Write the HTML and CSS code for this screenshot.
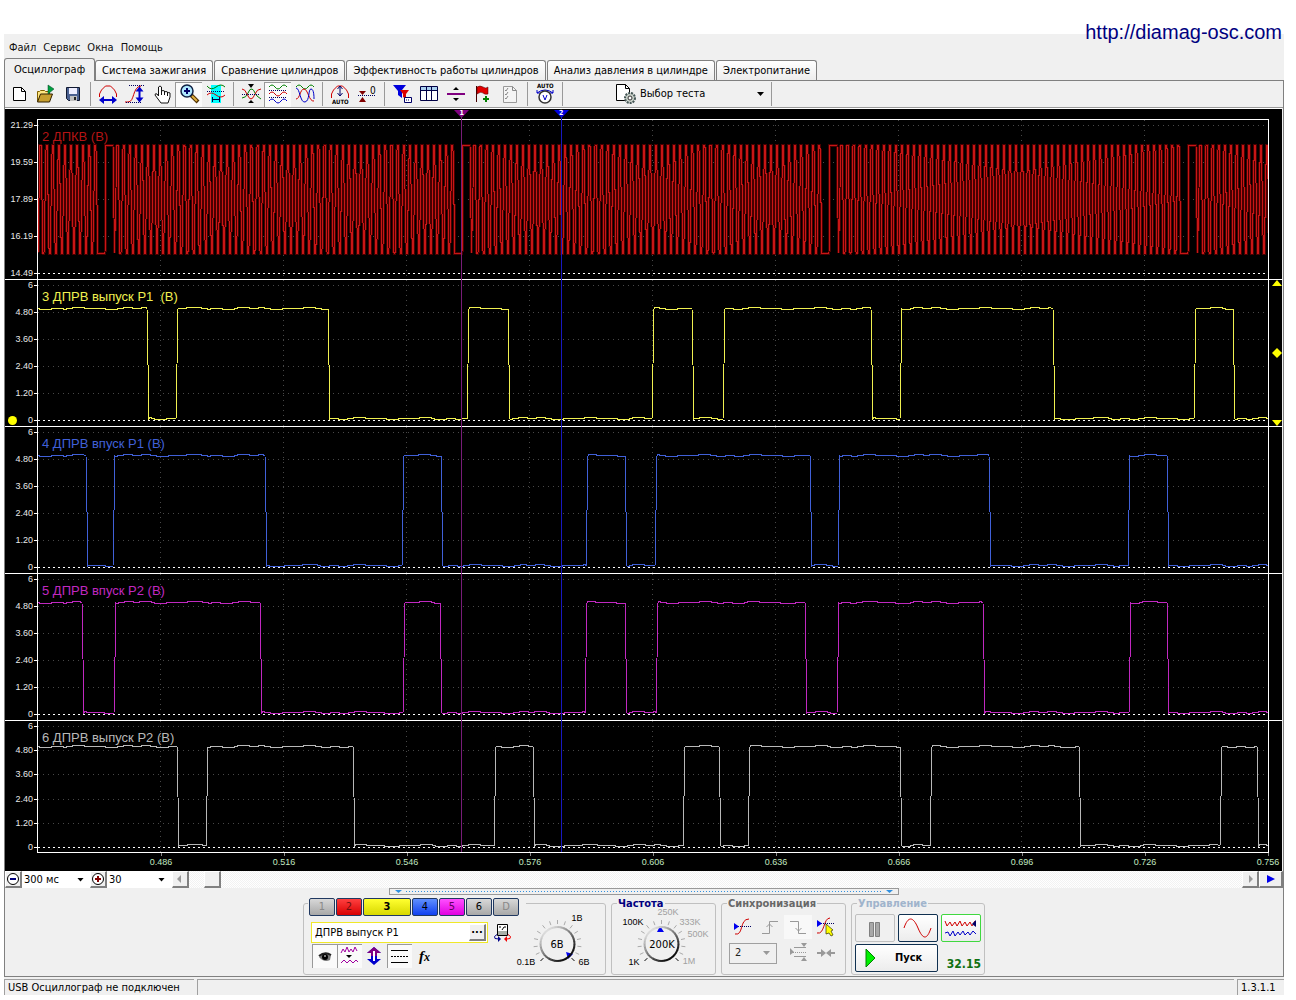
FILE: index.html
```html
<!DOCTYPE html>
<html lang="ru">
<head>
<meta charset="utf-8">
<title>Осциллограф</title>
<link rel="stylesheet" href="styles.css">
</head>
<body>
<a class="site" href="#site">http://diamag-osc.com</a>
<main class="window">
  <nav class="menu">
    <a href="#file">Файл</a><a href="#service">Сервис</a><a href="#windows">Окна</a><a href="#help">Помощь</a>
  </nav>
  <div class="tabs">
    <button class="tab active">Осциллограф</button>
    <button class="tab">Система зажигания</button>
    <button class="tab">Сравнение цилиндров</button>
    <button class="tab">Эффективность работы цилиндров</button>
    <button class="tab">Анализ давления в цилиндре</button>
    <button class="tab">Электропитание</button>
  </div>
  <div class="page">
    <div class="toolbar">
      <button class="tool" aria-label="Новый"><svg viewBox="0 0 24 24"><path d="M6.500 5.500h8l4 4v9h-12z" fill="#fff" stroke="#000"/><path d="M14.500 5.500v4h4" fill="none" stroke="#000"/></svg></button>
      <button class="tool" aria-label="Открыть"><svg viewBox="0 0 24 24"><path d="M3.500 19.500v-10h2l1-1h4l1 1h4v3" fill="#ffe680" stroke="#806000"/><path d="M3.500 20l3-8h12l-3 8z" fill="#c8a030" stroke="#302000"/><path d="M14 3v9l6-5z" fill="#00a040" stroke="#004020" stroke-width=".5"/></svg></button>
      <button class="tool" aria-label="Сохранить"><svg viewBox="0 0 24 24"><path d="M5.500 5.500h13v13h-11l-2-2z" fill="#4a6090" stroke="#101830"/><path d="M8 6h8v6h-8z" fill="#eef"/><path d="M9 14h7v5h-7z" fill="#c0c0c0"/><path d="M13 15h2v3h-2z" fill="#222"/></svg></button>
      <i class="sep"></i>
      <button class="tool" aria-label="Растянуть по времени"><svg viewBox="0 0 24 24"><path d="M3.500 15V12l2-4 4-4h5l4 4 2 4v3" class="red"/><path d="M3 18l5-4v3h8v-3l5 4-5 4v-3H8v3z" fill="#00c"/></svg></button>
      <button class="tool" aria-label="Растянуть по амплитуде"><svg viewBox="0 0 24 24"><path d="M2 20h3c7 0 4-15 13-16" class="red"/><path d="M6 3.500h15M3 20.500h15" class="dots"/><path d="M16.500 4.500l-4 5h3v6h-3l4 5 4-5h-3v-6h3z" fill="#00c"/></svg></button>
      <button class="tool" aria-label="Рука"><svg viewBox="0 0 24 24"><path d="M8.500 14V5q1.500-2 3 0v6-2q1.500-1 3 0v2-1q1.500-1 3 0v1q1.500-1 2.500 0v4l-2 6h-7l-6-8q0-2 2-1z" fill="#fff" stroke="#111"/><path d="M11.500 10v3M14.500 10v3M17.500 11v3" stroke="#111"/></svg></button>
      <button class="tool pressed" aria-label="Лупа"><svg viewBox="0 0 24 24"><path d="M14 13l7 7" stroke="#503000" stroke-width="4"/><path d="M15 14l5 5" stroke="#e0b040" stroke-width="2"/><circle cx="10" cy="9" r="6" fill="#aee8ff" stroke="#124" stroke-width="1.500"/><path d="M7 9h6M10 6v6" stroke="#006" stroke-width="2"/></svg></button>
      <button class="tool" aria-label="Выделить участок"><svg viewBox="0 0 24 24"><path d="M7 3h10v18H7z" fill="#0ff"/><path d="M3 4q4 5 9 1t9 0" class="green"/><path d="M3 9.500h18" class="dots"/><path d="M3 13q4-4 9 0t9 0" class="red"/><path d="M8.500 15v5M15.500 15v5M8 17.500h8" stroke="#004"/></svg></button>
      <i class="sep"></i>
      <button class="tool" aria-label="Совместить"><svg viewBox="0 0 24 24"><path d="M3 16q4 0 6-5t4-4 3 4 6 6" class="green"/><path d="M3 7q3 0 5 5t4 5 4-5 6-5" class="red"/><path d="M3 12.500h18" class="dots"/><path d="M9 2h6l-3 4zM9 21h6l-3-3z"/></svg></button>
      <button class="tool pressed" aria-label="Разделить каналы"><svg viewBox="0 0 24 24"><path d="M3 5q3-4 6 0t6 0 6 0" class="green"/><path d="M3 12q3-4 6 0t6 0 6 0" class="red"/><path d="M3 19q3-4 6 0t6 0 6 0" class="blue"/><path d="M3 8.500h18M3 15.500h18" class="dots"/></svg></button>
      <button class="tool" aria-label="Наложить каналы"><svg viewBox="0 0 24 24"><path d="M3 5q3-4 6 0t6 0 6 0" class="green"/><path d="M3 17c4 0 4-10 8-10s5 13 10 12" class="red"/><path d="M3 6c4 0 4 15 9 14s3-13 6-13 3 8 3 10" class="blue"/></svg></button>
      <i class="sep"></i>
      <button class="tool" aria-label="Авто масштаб"><svg viewBox="0 0 24 24"><path d="M3.500 16v-4l2-4 4-4h5l4 4 2 4v4" class="red"/><path d="M12 4v10M9.500 7l2.500-3 2.500 3M9.500 11l2.500 3 2.500-3" fill="none" stroke="#006"/><text x="4" y="22" class="mini">AUTO</text></svg></button>
      <button class="tool" aria-label="Установить ноль"><svg viewBox="0 0 24 24"><path d="M4 9h7l-3.500 4zM4 20h7l-3.500-5z" fill="#800000"/><path d="M3 13.500h18" class="dots"/><text x="15" y="12" class="zero">0</text></svg></button>
      <i class="sep"></i>
      <button class="tool" aria-label="Фильтр"><svg viewBox="0 0 24 24"><path d="M3 3h13l-4 5v8l-4-3V9z" fill="#00d"/><path d="M10 8h9l-3 4v5l-3-2v-3z" fill="#d00"/><path d="M14.500 15.500h7v5h-7z" fill="#fff" stroke="#006"/><path d="M16 18h4" class="dots"/></svg></button>
      <button class="tool" aria-label="Таблица"><svg viewBox="0 0 24 24"><path d="M3.500 4.500h17v14h-17z" fill="#fff" stroke="#004"/><path d="M4 5h16v3H4z" fill="#aad0f0"/><path d="M4 8.500h16M9.500 5v13M14.500 5v13" stroke="#004"/></svg></button>
      <button class="tool" aria-label="Линейка"><svg viewBox="0 0 24 24"><path d="M3 11h18v2H3z" fill="#800080"/><path d="M9 8h6l-3-3zM9 16h6l-3 3z"/></svg></button>
      <button class="tool" aria-label="Добавить маркер"><svg viewBox="0 0 24 24"><path d="M5.500 4v16" stroke="#400"/><path d="M6 5q3-2 6 0t5 0v7q-3 1-5-1t-6 1z" fill="#e00000" stroke="#400" stroke-width=".5"/><path d="M12 17h6M15 14v6" stroke="#008000" stroke-width="2"/></svg></button>
      <button class="tool" aria-label="Отчёт"><svg viewBox="0 0 24 24"><path d="M5.500 4.500h9l4 4v12h-13z" fill="#f4f4f4" stroke="#999"/><path d="M14.500 4.500v4h4M7 8l1 1 2-3M7 12l1 1 2-3M7 16l1 1 2-3" fill="none" stroke="#888"/></svg></button>
      <i class="sep"></i>
      <button class="tool" aria-label="Авто напряжение"><svg viewBox="0 0 24 24"><text x="4" y="6" class="mini">AUTO</text><path d="M4 11q8-6 16 0M4 8v3h3M20 8v3h-3" class="blue"/><circle cx="12" cy="15" r="6" fill="#fff" stroke="#333" stroke-width="1.500"/><path d="M10 13l2 5 2-5" class="blue"/></svg></button>
      <i class="sep"></i>
      <button class="test">
        <svg class="gear" viewBox="0 0 22 22"><path d="M1.500 1.500h9l4 4v12h-13z" fill="#fff" stroke="#000"/><path d="M10.500 1.500v4h4" fill="none" stroke="#000"/><circle cx="15" cy="15" r="5" fill="#c8d0c8" stroke="#455" stroke-width="2" stroke-dasharray="2 1"/><circle cx="15" cy="15" r="2" fill="#fff" stroke="#333"/></svg>
        <span>Выбор теста</span><i class="down"></i>
      </button>
      <i class="sep"></i>
    </div>

    <section class="chart">
      <div class="panel crank">
        <div class="scale"><span>21.29</span><span>19.59</span><span>17.89</span><span>16.19</span><span>14.49</span></div>
        <div class="plot"><svg viewBox="0 0 1230 159" preserveAspectRatio="none" data-channel="2"></svg><b>2 ДПКВ (В)</b></div>
        <div class="gutter"></div>
      </div>
      <div class="panel yellow">
        <div class="scale"><span>6</span><span>4.80</span><span>3.60</span><span>2.40</span><span>1.20</span><span class="chosen">0</span></div>
        <div class="plot"><svg viewBox="0 0 1230 146" preserveAspectRatio="none" data-channel="3"></svg><b>3 ДПРВ выпуск Р1&nbsp; (В)</b></div>
        <div class="gutter">
          <svg viewBox="0 0 10 6"><path d="M0 6l5-6 5 6z"/></svg>
          <svg class="level" viewBox="0 0 10 10"><path d="M0 5l5-5 5 5-5 5z"/></svg>
          <svg viewBox="0 0 10 6"><path d="M0 0h10L5 6z"/></svg>
        </div>
      </div>
      <div class="panel azure">
        <div class="scale"><span>6</span><span>4.80</span><span>3.60</span><span>2.40</span><span>1.20</span><span>0</span></div>
        <div class="plot"><svg viewBox="0 0 1230 146" preserveAspectRatio="none" data-channel="4"></svg><b>4 ДПРВ впуск Р1 (В)</b></div>
        <div class="gutter"></div>
      </div>
      <div class="panel magenta">
        <div class="scale"><span>6</span><span>4.80</span><span>3.60</span><span>2.40</span><span>1.20</span><span>0</span></div>
        <div class="plot"><svg viewBox="0 0 1230 146" preserveAspectRatio="none" data-channel="5"></svg><b>5 ДПРВ впуск Р2 (В)</b></div>
        <div class="gutter"></div>
      </div>
      <div class="panel grey">
        <div class="scale"><span>6</span><span>4.80</span><span>3.60</span><span>2.40</span><span>1.20</span><span>0</span></div>
        <div class="plot"><svg viewBox="0 0 1230 131" preserveAspectRatio="none" data-channel="6"></svg><b>6 ДПРВ выпуск Р2 (В)</b></div>
        <div class="gutter"></div>
      </div>
      <div class="times"><span>0.486</span><span>0.516</span><span>0.546</span><span>0.576</span><span>0.606</span><span>0.636</span><span>0.666</span><span>0.696</span><span>0.726</span><span>0.756</span></div>
      <div class="cursors">
        <div class="cursor one"><svg viewBox="0 0 15 8"><path d="M0 0h15L7.500 8z"/></svg><span>1</span></div>
        <div class="cursor two"><svg viewBox="0 0 15 8"><path d="M0 0h15L7.500 8z"/></svg><span>2</span></div>
      </div>
    </section>

    <div class="timebar">
      <button class="raised" aria-label="Уменьшить"><svg viewBox="0 0 16 16"><circle cx="8" cy="8" r="5.500" fill="#fff" stroke="#000"/><path d="M5 8h6" stroke="#00007a" stroke-width="2"/></svg></button>
      <label class="combo range"><select aria-label="Длительность"><option>300 мс</option></select><i class="down"></i></label>
      <button class="raised" aria-label="Увеличить"><svg viewBox="0 0 16 16"><circle cx="8" cy="8" r="5.500" fill="#fff" stroke="#000"/><path d="M5 8h6M8 5v6" stroke="#800000" stroke-width="2"/></svg></button>
      <label class="combo step"><select aria-label="Шаг"><option>30</option></select><i class="down"></i></label>
      <button class="raised" aria-label="Назад"><svg viewBox="0 0 16 16"><path d="M9 4v8L5 8z" fill="#999"/></svg></button>
      <div class="track"><button class="raised" aria-label="Позиция"></button></div>
      <button class="raised" aria-label="Вперёд"><svg viewBox="0 0 16 16"><path d="M7 4v8l4-4z" fill="#999"/></svg></button>
      <button class="raised play" aria-label="Воспроизвести"><svg viewBox="0 0 16 16"><path d="M4 4v8l8-4z" fill="#00e"/></svg></button>
    </div>

    <div class="splitter"><i></i><i class="line"></i><i></i></div>

    <div class="controls">
      <section class="group channels">
        <div class="left">
          <div class="keys">
            <button class="key off">1</button><button class="key k2">2</button><button class="key k3">3</button><button class="key k4">4</button><button class="key k5">5</button><button class="key">6</button><button class="key off">D</button>
          </div>
          <div class="naming">
            <div class="name"><input type="text" value="ДПРВ выпуск Р1" aria-label="Имя канала"><button class="raised">...</button></div>
            <button class="plain" aria-label="Поменять датчик"><svg viewBox="0 0 20 20"><path d="M4.500 1.500h10v11h-10z" fill="#fff" stroke="#000"/><path d="M5 8h9v4H5z" fill="#a8b0a8"/><path d="M6 4h2M11 4h2M9 7l2-3" stroke="#000"/><path d="M4 11.500q-4 2-2 4l4 .5" fill="none" stroke="#008"/><path d="M5 13v6l3-3z" fill="#008"/><path d="M15 11.500q4 2 2 4l-3 .5" fill="none" stroke="#e00"/><path d="M14 13v6l-3-3z" fill="#e00"/></svg></button>
          </div>
          <div class="modes">
            <button class="mode on" aria-label="Показать"><svg viewBox="0 0 24 24"><path d="M7 13q6-6 12-2l-1 5q-6 3-11-3z" fill="#777"/><path d="M7 12q6-5 12-1" fill="none" stroke="#222" stroke-width="2"/><circle cx="13" cy="13" r="3"/><path d="M12 12h2" stroke="#fff"/></svg></button>
            <button class="mode on" aria-label="Сглаживание"><svg viewBox="0 0 24 24"><path d="M4 9l2-4 2 3 2-5 2 5 2-3 2 3 2-5 2 4M4 19l3-3 3 3 3-3 3 3 3-3 2 2" fill="none" stroke="#a000a0"/><path d="M9 11h6l-3 3z"/></svg></button>
            <button class="mode" aria-label="Смещение"><svg viewBox="0 0 24 24"><path d="M12 3l7 6h-4v6h4l-7 6-7-6h4V9H5z" fill="#00c"/><path d="M12 3l7 6h-4v3H9V9H5z" fill="#800080"/><path d="M12 7v10" stroke="#fff" stroke-width="2"/></svg></button>
            <button class="mode on" aria-label="Уровни"><svg viewBox="0 0 24 24"><path d="M4 6.500h17M4 18.500h17" stroke="#000"/><path d="M4 12.500h17" stroke="#000" stroke-dasharray="2 1"/></svg></button>
            <button class="mode fx"><i>f</i>x</button>
          </div>
        </div>
        <svg class="knob" viewBox="0 0 84 64" data-knob="volt">
          <g class="label"><text x="61" y="14" text-anchor="middle">1В</text><text x="10" y="58" text-anchor="middle">0.1В</text><text x="68" y="58" text-anchor="middle">6В</text></g>
          <text class="value" x="41" y="41" text-anchor="middle">6В</text>
          <path d="M50 45l7 2-5 5z" fill="#00e"/>
        </svg>
      </section>
      <section class="group rate">
        <h2 class="navy">Частота</h2>
        <svg class="knob" viewBox="0 0 100 64" data-knob="rate">
          <g class="label"><text x="21" y="18" text-anchor="middle">100K</text><text x="22" y="58" text-anchor="middle">1K</text></g>
          <g class="label dim"><text x="56" y="8" text-anchor="middle">250K</text><text x="78" y="18" text-anchor="middle">333K</text><text x="86" y="30" text-anchor="middle">500K</text><text x="77" y="57" text-anchor="middle">1M</text></g>
          <text class="value" x="50" y="41" text-anchor="middle">200K</text>
          <path d="M45 25l3-6 4 6z" fill="#00e"/>
        </svg>
      </section>
      <section class="group sync">
        <h2>Синхронизация</h2>
        <div class="syncgrid">
          <button class="plain" aria-label="Уровень"><svg viewBox="0 0 24 24"><path d="M5 19c9 2 4-15 14-15" class="red"/><path d="M4 11.500h17" class="dots"/><path d="M4 8v7l5-3.500z" fill="#00e"/></svg></button>
          <button class="plain" aria-label="Фронт"><svg viewBox="0 0 24 24"><path d="M4 18.500h7.500v-12H20M8.500 12l3-3 3 3" fill="none" stroke="#999"/></svg></button>
          <button class="plain soft" aria-label="Спад"><svg viewBox="0 0 24 24"><path d="M4 6.500h8.500v12H20M9.500 13l3 3 3-3" fill="none" stroke="#999"/></svg></button>
          <button class="plain" aria-label="Выбор уровня"><svg viewBox="0 0 24 24"><path d="M3 18c8 2 6-15 13-15" class="red"/><path d="M3 8.500h18" class="dots"/><path d="M3 5v7l5-3.500z" fill="#00e"/><path d="M12 9l7 6-2 1 2 4-2 1-2-3-3 1z" fill="#ff0" stroke="#330" stroke-width=".7"/></svg></button>
          <label class="combo source"><select aria-label="Канал"><option>2</option></select><i class="down"></i></label>
          <button class="plain" aria-label="Гистерезис"><svg viewBox="0 0 24 24"><path d="M4 7v7l4-3z" fill="#999"/><path d="M8 6.500h12M8 15.500h12" stroke="#999"/><path d="M7 11.500h13" stroke="#999" stroke-dasharray="1 1"/><path d="M15 2h6l-3 4zM15 20h6l-3-4z" fill="#999"/></svg></button>
          <button class="plain" aria-label="Центр"><svg viewBox="0 0 24 24"><path d="M3 11h4V8l5 4-5 4v-3H3zM21 11h-4V8l-5 4 5 4v-3h4z" fill="#999"/></svg></button>
        </div>
      </section>
      <section class="group run">
        <h2 class="pale">Управление</h2>
        <div class="rungrid">
          <button class="box idle" aria-label="Пауза"><svg viewBox="0 0 38 26"><path d="M13.500 7.500h4v14h-4zM19.500 7.500h4v14h-4z" fill="#a8a8a8" stroke="#808080"/></svg></button>
          <button class="box" aria-label="Один канал"><svg viewBox="0 0 38 26"><path d="M5 13C9 1 14 1 19 13s9 12 13 0" class="red"/></svg></button>
          <button class="box live" aria-label="Все каналы"><svg viewBox="0 0 38 26"><path d="M3 6l2 5 3-4 2 4 3-4 2 4 3-5 2 5 3-4 2 4 3-4 2 4 3-5" class="red"/><path d="M3 18l3-1 2 4 3-5 2 5 3-4 2 3 3-4 2 4 3-3 2 3 3-4 3 3" class="blue"/><path d="M34 5v7l-4-3z" fill="#006"/></svg></button>
          <button class="box start"><svg viewBox="0 0 12 20"><path d="M1 1v18l9-9z" fill="#00f000" stroke="#008000"/></svg><span>Пуск</span></button>
          <output class="reading">32.15</output>
        </div>
      </section>
    </div>
  </div>
  <footer class="status"><span class="usb">USB Осциллограф не подключен</span><span class="rest"></span><span class="version">1.3.1.1</span></footer>
</main>
<script src="chart.js"></script>
</body>
</html>
```
FILE: styles.css
```css
* { box-sizing: border-box; }
body {
  margin: 0;
  padding: 34px 12px 5px 4px;
  background: #fff;
  color: #000;
  font: 11px/14px "DejaVu Sans Condensed", "DejaVu Sans", sans-serif;
}
button, input, select { font: inherit; color: inherit; margin: 0; padding: 0; border: 0; background: none; }
svg { display: block; }
.site {
  position: absolute;
  top: 20px;
  right: 14px;
  font: 20px/24px "Liberation Sans", sans-serif;
  color: #000080;
  text-decoration: none;
}
.window { background: #f0f0f0; }
.menu { display: flex; gap: 7px; padding: 7px 5px 3px; }
.menu a { color: #111; text-decoration: none; }
.tabs { display: flex; align-items: flex-end; gap: 1px; }
.tab {
  height: 20px;
  padding: 0 6px;
  border: 1px solid #808080;
  border-bottom: 0;
  border-radius: 3px 3px 0 0;
  background: linear-gradient(#fff, #ededed);
  white-space: nowrap;
}
.tab.active { height: 23px; padding: 0 9px; margin: 0 -1px -1px 0; background: #f0f0f0; position: relative; }
.page { border: 1px solid #808080; }
.toolbar { display: flex; align-items: center; height: 27px; border-bottom: 1px solid #999; background: #f0f0f0; }
.tool { width: 27px; height: 25px; display: flex; align-items: center; justify-content: center; }
.tool svg, .mode svg, .plain svg { width: 24px; height: 24px; }
.pressed, .mode.on { background: #fafafa; box-shadow: inset 1px 1px #999; }
.sep { width: 1px; height: 24px; margin: 0 3px 0 4px; background: #999; }
.red { fill: none; stroke: #d00000; }
.green { fill: none; stroke: #008000; }
.blue { fill: none; stroke: #0000c8; }
.dots { fill: none; stroke: #000060; stroke-dasharray: 1 1; }
.mini { font: bold 6px/1 "DejaVu Sans Condensed", sans-serif; }
.zero { font: 10px/1 "DejaVu Sans Condensed", sans-serif; }
.test { display: flex; align-items: center; gap: 3px; width: 152px; margin-left: 49px; text-align: left; }
.test span { flex: 1; }
.gear { width: 22px; height: 22px; }
.down { width: 7px; height: 4px; background: #000; clip-path: polygon(0 0, 100% 0, 50% 100%); pointer-events: none; }
.test .down { margin-right: 3px; }

.chart { position: relative; overflow: hidden; padding-top: 10px; border-top: 1px solid #fff; background: #000; margin-right: 1px; }
.panel { display: grid; grid-template-columns: 32px 1fr 13px; border-top: 1px solid #fff; }
.panel.crank { border-top: 0; }
.scale { display: flex; flex-direction: column; justify-content: space-between; margin-top: -1px; align-items: flex-end; font: 9px/12px "Liberation Sans", sans-serif; color: #e8e8e8; }
.crank .scale { margin-top: 0; }
.scale span { position: relative; padding-right: 4px; }
.scale span::after { content: ""; position: absolute; right: 0; top: 6px; width: 3px; height: 1px; background: #fff; }
.chosen::before { content: ""; position: absolute; right: 20px; top: 2px; width: 9px; height: 9px; border-radius: 5px; background: #ff0; }
.plot { position: relative; border: solid #fff; border-width: 0 1px; }
.crank .plot { border-top-width: 1px; }
.grey .plot { border-bottom-width: 1px; }
.plot svg { width: 100%; height: 146px; }
.crank .plot svg { height: 159px; }
.grey .plot svg { height: 131px; }
.plot b { position: absolute; left: 4px; top: 9px; font: 13px/16px "Liberation Sans", sans-serif; white-space: pre; }
.plot path { fill: none; stroke: currentColor; vector-effect: non-scaling-stroke; shape-rendering: crispEdges; }
.plot .grid { stroke: #484848; stroke-dasharray: 1 4; }
.plot .base { stroke: #fff; stroke-dasharray: 2 3; }
.plot .glow { stroke: #480000; stroke-width: 3px; }
.plot .teeth { stroke: #c81616; }
.crank { color: #b41414; }
.yellow { color: #f0f050; }
.azure { color: #4060d8; }
.magenta { color: #c028c0; }
.grey { color: #b8b8b8; }
.gutter { display: flex; flex-direction: column; align-items: center; justify-content: space-between; fill: #ff0; padding-left: 2px; }
.gutter svg { width: 10px; height: 6px; }
.gutter .level { height: 10px; }
.times { display: flex; height: 18px; padding: 0 14px 0 33px; font: 9px/12px "Liberation Sans", sans-serif; color: #c0e8c0; }
.times::before { content: ""; flex: none; width: 5%; }
.times span { position: relative; flex: none; width: 10%; padding-top: 3px; text-align: center; }
.times span::before { content: ""; position: absolute; left: 50%; top: 0; width: 1px; height: 3px; background: #888; }
.cursors { position: absolute; left: 33px; right: 14px; top: 1px; bottom: 19px; pointer-events: none; }
.cursor { position: absolute; top: 0; bottom: 0; width: 15px; margin-left: -7px; color: #fff; }
.cursor::after { content: ""; position: absolute; left: 7px; top: 6px; bottom: 0; width: 1px; background: #781c78; }
.cursor.one { left: 34.4%; fill: #800080; }
.cursor.two { left: 42.500%; fill: #0000e0; }
.cursor.two::after { background: #1818c0; }
.cursor svg { width: 15px; height: 8px; }
.cursor span { position: absolute; left: 0; top: 0; width: 15px; text-align: center; font: bold 7px/7px "DejaVu Sans Condensed", sans-serif; }

.timebar { display: flex; height: 17px; background: #fff; }
.raised { width: 17px; height: 17px; flex: none; display: flex; align-items: center; justify-content: center; background: #f0f0f0; border: solid; border-width: 1px 2px 2px 1px; border-color: #fff #808080 #808080 #fff; }
.raised svg { width: 16px; height: 16px; flex: none; }
.combo { position: relative; display: flex; align-items: center; }
.combo select { appearance: none; width: 100%; height: 100%; outline: 0; border-radius: 0; }
.combo .down { position: absolute; right: 6px; }
.range { width: 68px; padding-left: 2px; }
.step { width: 64px; padding-left: 2px; }
.step + .raised { margin-left: 1px; }
.track { flex: 1; padding-left: 15px; background: repeating-conic-gradient(#fff 0 25%, #f2f2f2 0 50%) 0 0 / 2px 2px; }
.play { width: 24px; }
.splitter { display: flex; align-items: center; gap: 4px; width: 510px; height: 7px; margin: 0 auto; padding: 0 5px; border: 1px solid #999; }
.splitter i { width: 7px; height: 3px; background: #3090e0; clip-path: polygon(0 0, 100% 0, 50% 100%); }
.splitter .line { flex: 1; height: 1px; clip-path: none; background: repeating-linear-gradient(90deg, #3090e0 0 1px, #f0f0f0 1px 3px); }
.controls { display: flex; justify-content: center; gap: 5px; padding: 8px 0 1px; }
.group { height: 72px; border: 1px solid #c0c0c0; border-radius: 3px; }
.group h2 { width: max-content; margin: -7px 0 0 5px; padding: 0 1px; background: #f0f0f0; font: bold 11px/14px "DejaVu Sans Condensed", sans-serif; color: #686868; }
.group h2.navy { color: #000080; }
.group h2.pale { color: #a0b4cc; }
.channels { display: flex; width: 303px; padding-left: 4px; }
.left { width: 208px; }
.keys { display: flex; gap: 1px; width: 218px; margin-top: -6px; padding-left: 1px; background: #f0f0f0; }
.key { width: 26px; height: 18px; border: 1px solid #203860; border-radius: 2px; background: linear-gradient(#d8d8d8, #a8a8a8); }
.key.off { color: #888; }
.key.k2 { background: linear-gradient(#ff4040, #d80000); color: #701010; }
.key.k3 { width: 48px; background: linear-gradient(#ffff30, #d8d800); font-weight: bold; }
.key.k4 { background: linear-gradient(#6090ff, #1040f0); }
.key.k5 { background: linear-gradient(#ff50ff, #e000e0); color: #600060; }
.naming { display: flex; align-items: center; gap: 5px; margin: 6px 0 1px 3px; }
.name { display: flex; width: 177px; height: 21px; padding: 1px; border: 1px solid #f0e828; background: #fff; }
.name input { flex: 1; min-width: 0; padding-left: 2px; outline: 0; }
.name .raised { height: 17px; font-weight: bold; line-height: 8px; padding-bottom: 4px; }
.naming .plain svg { width: 20px; height: 20px; }
.modes { display: flex; padding-left: 4px; }
.mode { width: 25px; height: 24px; }
.fx { font: italic bold 12px/24px "Liberation Serif", serif; }
.fx i { font-size: 15px; }
.knob { width: 84px; height: 64px; margin-top: 3px; overflow: visible; }
.rate { width: 105px; }
.rate .knob { width: 100px; height: 64px; margin-top: -4px; }
.label { font: 9px/1 "Liberation Sans", sans-serif; }
.dim { fill: #a0a0a0; }
.value { font: 11px/1 "DejaVu Sans Condensed", sans-serif; }
.sync { width: 125px; }
.syncgrid { display: grid; grid-template-columns: repeat(4, 28px); grid-template-rows: 25px 28px; padding: 3px 0 0 6px; align-items: center; }
.plain { display: flex; align-items: center; justify-content: center; }
.soft { background: #f8f8f8; }
.source { grid-column: span 2; width: 48px; height: 21px; border: 1px solid #a0a0a0; color: #222; margin-left: 1px; }
.source select { padding-left: 5px; }
.source .down { background: #999; }
.run { width: 134px; }
.rungrid { display: grid; grid-template-columns: repeat(3, 40px); grid-template-rows: 28px 28px; gap: 2px 3px; padding: 3px; }
.box { display: flex; align-items: center; justify-content: center; border: 1px solid #103050; border-radius: 2px; background: linear-gradient(#fff, #ececec); }
.box svg { width: 38px; height: 26px; }
.box.idle { border-color: #c0c0c0; background: #f0f0f0; }
.box.live { border-color: #40d840; }
.box.start { grid-column: span 2; justify-content: flex-start; padding-left: 9px; gap: 18px; font-weight: bold; }
.box.start svg { width: 12px; height: 20px; }
.reading { align-self: end; justify-self: end; font: bold 12px/16px "DejaVu Sans Condensed", sans-serif; color: #107010; }
.status { display: flex; gap: 3px; padding-top: 2px; }
.status span { height: 16px; border: solid #a0a0a0; border-width: 1px 0 0 1px; padding-left: 3px; line-height: 15px; }
.usb { width: 190px; }
.rest { flex: 1; }
.version { width: 47px; }
```
FILE: chart.js
```js
const NS = 'http://www.w3.org/2000/svg';
const WIDTH = 1230;

function addPath(parent, d, className) {
  const path = document.createElementNS(NS, 'path');
  path.setAttribute('d', d);
  if (className) path.setAttribute('class', className);
  parent.append(path);
  return path;
}

function drawGrid(svg, rows, base, height) {
  for (let i = 1; i < 10; i++) addPath(svg, `M${i * WIDTH / 10 - 0.5} 0V${height}`, 'grid');
  rows.forEach(y => addPath(svg, `M0 ${y + 0.5}H${WIDTH}`, 'grid'));
  addPath(svg, `M0 ${base + 0.5}H${WIDTH}`, 'base');
}

// Small ripple on the flat parts of the hall sensor signal
function ripple(x) {
  return Math.round(0.8 * Math.sin(x / 9) + 0.5 * Math.sin(x / 3.7));
}

// The signal starts high and toggles at each edge
function hall(edges, high, low) {
  let d = `M0 ${high}`, level = high, from = 0;
  [...edges, WIDTH].forEach((edge, i) => {
    for (let x = from; x < edge; x += 3) d += `L${x} ${level + ripple(x) - 0.5}`;
    d += `L${edge} ${level}`;
    if (i < edges.length) {
      level = level === high ? low : high;
      d += `L${edge + 2} ${level}`;
      from = edge + 3;
    }
  });
  return d;
}

// Crank wheel: 58 teeth and a gap of two
function crank(gaps) {
  let d = 'M0 133', x = 0;
  gaps.forEach(gap => {
    const count = Math.round((gap - 6 - x) / 6.05);
    const step = (gap - 6 - x) / count;
    for (let i = 0; i < count; i++) {
      const t = x + i * step;
      d += `L${t + 2} 25H${t + 3}L${t + 5} 133H${t + 6}`;
    }
    d += `L${gap - 6} 133H${gap}L${gap + 1} 25H${gap + 8}L${gap + 9.5} 133`;
    x = gap + 10;
  });
  return d;
}

const channels = {
  3: { edges: [109, 138, 290, 429, 470, 614, 654, 685, 833, 862, 1015, 1156, 1195], high: 29, low: 139 },
  4: { edges: [48, 75, 227, 364, 403, 548, 587, 617, 772, 800, 951, 1090, 1129], high: 29, low: 139 },
  5: { edges: [44, 76, 222, 365, 402, 547, 587, 618, 767, 799, 945, 1091, 1129], high: 29, low: 139 },
  6: { edges: [139, 168, 315, 456, 495, 645, 681, 710, 862, 892, 1041, 1182, 1219], high: 26, low: 125 }
};

document.querySelectorAll('[data-channel]').forEach(svg => {
  const id = svg.dataset.channel;
  if (id === '2') {
    drawGrid(svg, [5, 42, 79, 116], 153, 159);
    const wave = crank([67, 424, 791, 1150, 1516]);
    addPath(svg, wave, 'glow');
    addPath(svg, wave, 'teeth');
    return;
  }
  const { edges, high, low } = channels[id];
  if (id === '6') drawGrid(svg, [5, 29, 53, 78, 102], 126, 131);
  else drawGrid(svg, [5, 32, 59, 86, 113], 140, 146);
  addPath(svg, hall(edges, high, low));
});

// Knobs: a shaded ring and tick marks over 270 degrees
document.querySelectorAll('[data-knob]').forEach(svg => {
  const cx = svg.dataset.knob === 'volt' ? 41.5 : 49.5, cy = 37;
  for (let i = 0; i <= 14; i++) {
    const a = (135 + i * 270 / 14) * Math.PI / 180;
    const tick = addPath(svg, `M${cx + 20 * Math.cos(a)} ${cy + 20 * Math.sin(a)}L${cx + 24 * Math.cos(a)} ${cy + 24 * Math.sin(a)}`);
    tick.setAttribute('stroke', i === 0 || i === 14 ? '#000' : '#aaa');
  }
  for (let i = 0; i < 36; i++) {
    const a = i * Math.PI / 18, b = a + 0.2;
    const shade = Math.round(115 - 105 * Math.cos(a - 0.8));
    const arc = addPath(svg, `M${cx + 17 * Math.cos(a)} ${cy + 17 * Math.sin(a)}L${cx + 17 * Math.cos(b)} ${cy + 17 * Math.sin(b)}`);
    arc.setAttribute('stroke', `rgb(${shade},${shade},${shade})`);
    arc.setAttribute('stroke-width', '2');
  }
});
```
